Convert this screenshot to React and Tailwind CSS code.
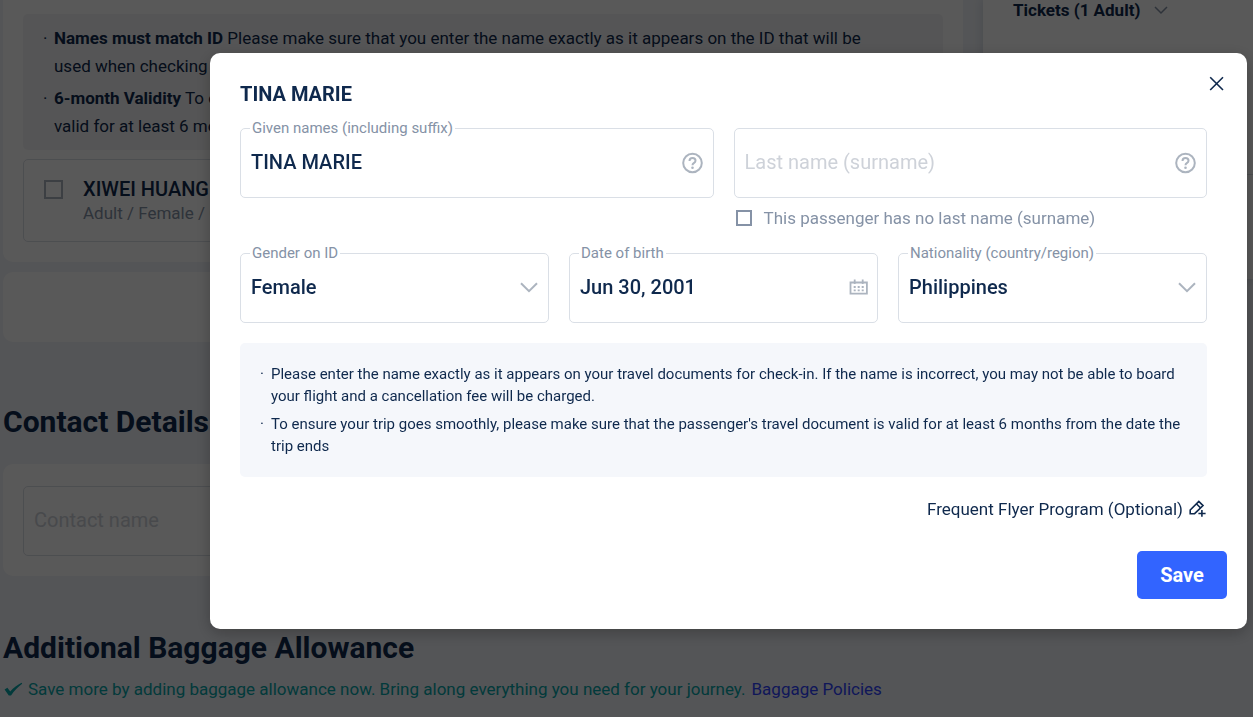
import React, { useState } from 'react';

const checkboxBase = 'shrink-0 appearance-none border-2 bg-white checked:bg-[#3264ff]';

function HelpIcon() {
  return (
    <svg width="22" height="22" viewBox="0 0 22 22" fill="none" stroke="#acb4bf" strokeWidth="2">
      <circle cx="10.5" cy="11" r="9.3" />
      <path d="M7.5 8.9C7.5 7.1 8.8 6 10.5 6s3 1.1 3 2.7c0 1.3-.8 1.9-1.7 2.5-.9.6-1.3 1-1.3 2.1" />
      <circle cx="10.5" cy="15.8" r="1.3" fill="#acb4bf" stroke="none" />
    </svg>
  );
}

function ChevronIcon() {
  return (
    <svg width="20" height="12" viewBox="0 0 20 12" fill="none" stroke="#acb4bf" strokeWidth="2">
      <path d="M2 1.2 L10 9.2 L18 1.2" />
    </svg>
  );
}

function CalendarIcon() {
  return (
    <svg width="20" height="18" viewBox="0 0 20 18" fill="none" stroke="#acb4bf" strokeWidth="1.8">
      <path d="M2.5 3.5h16.4v11.2H2.5z" />
      <path d="M6.7 .5v4.5M14.7 .5v4.5" />
      <path d="M5.7 8h2M9.7 8h2M13.7 8h2M5.7 11.3h2M9.7 11.3h2M13.7 11.3h2" />
    </svg>
  );
}

function PenPlusIcon() {
  return (
    <svg width="18" height="18" viewBox="0 0 18 18" fill="none" stroke="#0f294d" strokeWidth="1.6">
      <path d="M1.2 13.7V10L9.8 1.4 14 5.6 5.6 13.7z" />
      <path d="M7.4 3.8l4.2 4.2" />
      <path d="M12.9 9.9v6.9M9.4 13.5h7.2" />
    </svg>
  );
}

// Campo con borde y etiqueta sobre la línea superior
function Field({ id, label, icon, children }) {
  return (
    <div className="relative flex h-[70px] rounded-[5px] border border-[#dadfe6]">
      {label && (
        <label htmlFor={id} className="absolute -top-[11px] left-[9px] bg-white px-0.5 text-[15px] leading-5 text-[#8592a6]">
          {label}
        </label>
      )}
      {children}
      <span className="pointer-events-none absolute inset-y-0 right-[9px] flex items-center">{icon}</span>
    </div>
  );
}

const inputClass =
  'w-full appearance-none rounded-[5px] bg-transparent px-2.5 pb-0.5 text-xl font-medium text-[#0f294d] outline-none placeholder:font-normal placeholder:text-[#ced2d9]';

function Notice({ children }) {
  return (
    <li className="flex">
      <span className="w-[11px] shrink-0">·</span>
      <p>{children}</p>
    </li>
  );
}

function PassengerModal() {
  const [givenName, setGivenName] = useState('TINA MARIE');
  const [lastName, setLastName] = useState('');
  const [noLastName, setNoLastName] = useState(false);
  const [birthDate, setBirthDate] = useState('Jun 30, 2001');

  return (
    <div className="fixed inset-0 flex items-start justify-end bg-black/65 pt-[53px] pr-1.5">
      <form
        role="dialog"
        aria-label="Passenger"
        onSubmit={(e) => e.preventDefault()}
        className="relative w-full max-w-[1037px] rounded-[10px] bg-white pt-[27px] pr-10 pb-[30px] pl-[30px] shadow-[0_4px_16px_rgba(0,0,0,0.25)]"
      >
        <button type="button" aria-label="Close" className="absolute top-[23px] right-[22px]">
          <svg width="16" height="16" viewBox="0 0 16 16" fill="none" stroke="#0f294d" strokeWidth="1.6">
            <path d="M1.2 1.2 L14 14 M14 1.2 L1.2 14" />
          </svg>
        </button>
        <h2 className="text-xl leading-7 font-bold">TINA MARIE</h2>

        <div className="mt-5 grid grid-cols-2 gap-5">
          <Field id="given" label="Given names (including suffix)" icon={<HelpIcon />}>
            <input id="given" className={inputClass} value={givenName} onChange={(e) => setGivenName(e.target.value)} />
          </Field>
          <div>
            <Field id="last" icon={<HelpIcon />}>
              <input
                id="last"
                aria-label="Last name (surname)"
                placeholder="Last name (surname)"
                className={inputClass}
                value={lastName}
                disabled={noLastName}
                onChange={(e) => setLastName(e.target.value)}
              />
            </Field>
            <label className="mt-2 flex items-center gap-3 px-0.5 text-[17px] leading-6 text-[#8592a6]">
              <input
                type="checkbox"
                checked={noLastName}
                onChange={(e) => setNoLastName(e.target.checked)}
                className={`${checkboxBase} size-4 border-[#8592a6]`}
              />
              This passenger has no last name (surname)
            </label>
          </div>
        </div>

        <div className="mt-[23px] grid grid-cols-3 gap-5">
          <Field id="gender" label="Gender on ID" icon={<ChevronIcon />}>
            <select id="gender" className={inputClass} defaultValue="Female">
              <option>Female</option>
              <option>Male</option>
            </select>
          </Field>
          <Field id="birth" label="Date of birth" icon={<CalendarIcon />}>
            <input id="birth" className={inputClass} value={birthDate} onChange={(e) => setBirthDate(e.target.value)} />
          </Field>
          <Field id="nationality" label="Nationality (country/region)" icon={<ChevronIcon />}>
            <select id="nationality" className={inputClass} defaultValue="Philippines">
              <option>Philippines</option>
            </select>
          </Field>
        </div>

        <ul className="mt-5 space-y-1.5 rounded-[5px] bg-[#f5f7fb] p-5 text-[15px] leading-[22px]">
          <Notice>
            Please enter the name exactly as it appears on your travel documents for check-in. If the name is
            incorrect, you may not be able to board your flight and a cancellation fee will be charged.
          </Notice>
          <Notice>
            To ensure your trip goes smoothly, please make sure that the passenger's travel document is valid for at
            least 6 months from the date the trip ends
          </Notice>
        </ul>

        <div className="mt-5 flex justify-end">
          <button type="button" className="flex items-center gap-1.5 text-[17px] leading-6">
            Frequent Flyer Program (Optional)
            <PenPlusIcon />
          </button>
        </div>
        <div className="-mr-5 mt-[30px] flex justify-end">
          <button type="submit" className="h-12 w-[90px] rounded-[5px] bg-[#3264ff] text-xl font-bold text-white">
            Save
          </button>
        </div>
      </form>
    </div>
  );
}

function App() {
  return (
    <div className="min-h-screen overflow-hidden bg-[#f0f3f8] font-[Roboto,sans-serif] text-[#0f294d]">
      <div className="flex items-start gap-5 pl-[3px]">
        <main className="w-[960px] shrink-0">
          <section className="rounded-b-[10px] bg-white px-5 pt-3.5 pb-5">
            <ul className="space-y-1 rounded-[5px] bg-[#f4f4f5] py-2.5 pr-[60px] pl-5 text-[17px] leading-7">
              <Notice>
                <b>Names must match ID</b> Please make sure that you enter the name exactly as it appears on the ID
                that will be used when checking in.
              </Notice>
              <Notice>
                <b>6-month Validity</b> To ensure your trip goes smoothly, please make sure that the passenger's
                travel document is valid for at least 6 months from the date the trip ends.
              </Notice>
            </ul>
            <label className="mt-[9px] flex gap-5 rounded-[5px] border border-[#dadfe6] px-5 pt-4 pb-[17px]">
              <input type="checkbox" className={`${checkboxBase} mt-1 size-[19px] border-[#acb4bf]`} />
              <span>
                <span className="block text-xl leading-[26px] font-medium">XIWEI HUANG</span>
                <span className="block text-[17px] leading-[22px] text-[#8592a6]">Adult / Female / China</span>
              </span>
            </label>
          </section>
          <section className="mt-2.5 h-[70px] rounded-[10px] bg-white" />

          <h2 className="mt-[60px] text-[30px] leading-10 font-bold">Contact Details</h2>
          <section className="mt-[22px] rounded-[10px] bg-white px-5 pt-[22px] pb-5">
            <div className="flex h-[70px] w-[450px] rounded-[5px] border border-[#dadfe6]">
              <input aria-label="Contact name" placeholder="Contact name" className={inputClass} />
            </div>
          </section>

          <h2 className="mt-[52px] text-[30px] leading-10 font-bold">Additional Baggage Allowance</h2>
          <p className="mt-[9px] flex items-center text-[17px] leading-6 text-[#06a5a8]">
            <svg className="mr-1" width="21" height="16" viewBox="0 0 21 16" fill="#06a5a8">
              <path d="M1.6 8.4 L4.4 6.8 L7.2 10.4 C10.5 7 14.5 3.8 18.6 1.8 L19.2 2.8 C15 5.8 11.3 9.8 8 14.4 L5.8 14.4 Z" />
            </svg>
            Save more by adding baggage allowance now. Bring along everything you need for your journey.
            <a href="#policies" className="ml-1.5 text-[#2f43ff]">Baggage Policies</a>
          </p>
        </main>

        <aside className="h-[279px] grow bg-white pl-[30px] shadow-[0_0_10px_rgba(15,41,77,0.15)]">
          <button className="flex items-center gap-3.5 text-[17px] leading-5 font-bold">
            Tickets (1 Adult)
            <svg width="14" height="9" viewBox="0 0 14 9" fill="none" stroke="#8592a6" strokeWidth="1.5">
              <path d="M1 1 L7 7 L13 1" />
            </svg>
          </button>
          <hr className="mt-[154px] border-[#dadfe6]" />
        </aside>
      </div>
      <PassengerModal />
    </div>
  );
}

export default App;
